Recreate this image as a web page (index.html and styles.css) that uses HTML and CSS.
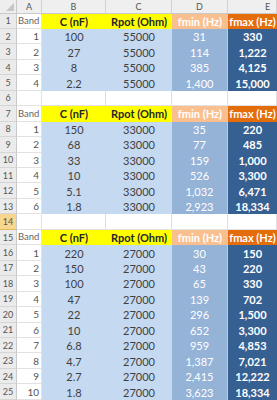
FILE: index.html
```html
<!DOCTYPE html>
<html>
<head>
<meta charset="utf-8">
<link rel="stylesheet" href="styles.css">
</head>
<body>
<div class="sheet">
  <div class="corner"><span class="tri"></span></div>
  <div class="ch">A</div><div class="ch">B</div><div class="ch">C</div><div class="ch">D</div><div class="ch ch-e">E</div>

  <div class="rh">1</div><div class="a band">Band</div><div class="y">C (nF)</div><div class="y">Rpot (Ohm)</div><div class="dh">fmin (Hz)</div><div class="eh">fmax (Hz)</div>
  <div class="rh">2</div><div class="a">1</div><div class="bc">100</div><div class="bc">55000</div><div class="d">31</div><div class="e">330</div>
  <div class="rh">3</div><div class="a">2</div><div class="bc">27</div><div class="bc">55000</div><div class="d">114</div><div class="e">1,222</div>
  <div class="rh">4</div><div class="a">3</div><div class="bc">8</div><div class="bc">55000</div><div class="d">385</div><div class="e">4,125</div>
  <div class="rh">5</div><div class="a">4</div><div class="bc">2.2</div><div class="bc">55000</div><div class="d">1,400</div><div class="e">15,000</div>
  <div class="rh">6</div><div class="a"></div><div class="w"></div><div class="w"></div><div class="w"></div><div class="w"></div>

  <div class="rh">7</div><div class="a band">Band</div><div class="y">C (nF)</div><div class="y">Rpot (Ohm)</div><div class="dh">fmin (Hz)</div><div class="eh">fmax (Hz)</div>
  <div class="rh">8</div><div class="a">1</div><div class="bc">150</div><div class="bc">33000</div><div class="d">35</div><div class="e">220</div>
  <div class="rh">9</div><div class="a">2</div><div class="bc">68</div><div class="bc">33000</div><div class="d">77</div><div class="e">485</div>
  <div class="rh">10</div><div class="a">3</div><div class="bc">33</div><div class="bc">33000</div><div class="d">159</div><div class="e">1,000</div>
  <div class="rh">11</div><div class="a">4</div><div class="bc">10</div><div class="bc">33000</div><div class="d">526</div><div class="e">3,300</div>
  <div class="rh">12</div><div class="a">5</div><div class="bc">5.1</div><div class="bc">33000</div><div class="d">1,032</div><div class="e">6,471</div>
  <div class="rh">13</div><div class="a">6</div><div class="bc">1.8</div><div class="bc">33000</div><div class="d">2,923</div><div class="e">18,334</div>
  <div class="rh sel">14</div><div class="a"></div><div class="w"></div><div class="w"></div><div class="w"></div><div class="w"></div>

  <div class="rh">15</div><div class="a band">Band</div><div class="y">C (nF)</div><div class="y">Rpot (Ohm)</div><div class="dh">fmin (Hz)</div><div class="eh">fmax (Hz)</div>
  <div class="rh">16</div><div class="a">1</div><div class="bc">220</div><div class="bc">27000</div><div class="d">30</div><div class="e">150</div>
  <div class="rh">17</div><div class="a">2</div><div class="bc">150</div><div class="bc">27000</div><div class="d">43</div><div class="e">220</div>
  <div class="rh">18</div><div class="a">3</div><div class="bc">100</div><div class="bc">27000</div><div class="d">65</div><div class="e">330</div>
  <div class="rh">19</div><div class="a">4</div><div class="bc">47</div><div class="bc">27000</div><div class="d">139</div><div class="e">702</div>
  <div class="rh">20</div><div class="a">5</div><div class="bc">22</div><div class="bc">27000</div><div class="d">296</div><div class="e">1,500</div>
  <div class="rh">21</div><div class="a">6</div><div class="bc">10</div><div class="bc">27000</div><div class="d">652</div><div class="e">3,300</div>
  <div class="rh">22</div><div class="a">7</div><div class="bc">6.8</div><div class="bc">27000</div><div class="d">959</div><div class="e">4,853</div>
  <div class="rh">23</div><div class="a">8</div><div class="bc">4.7</div><div class="bc">27000</div><div class="d">1,387</div><div class="e">7,021</div>
  <div class="rh">24</div><div class="a">9</div><div class="bc">2.7</div><div class="bc">27000</div><div class="d">2,415</div><div class="e">12,222</div>
  <div class="rh">25</div><div class="a">10</div><div class="bc">1.8</div><div class="bc">27000</div><div class="d">3,623</div><div class="e">18,334</div>
</div>
</body>
</html>
```

FILE: styles.css
```css
html, body {
  margin: 0;
  padding: 0;
  background: #ffffff;
  overflow: hidden;
}

.sheet {
  display: grid;
  grid-template-columns: 17px 25px 64px 66px 56px 49px;
  grid-template-rows: 13.5px repeat(25, 15.46px);
  width: 277px;
  height: 400px;
  font-family: Lato, "Open Sans", sans-serif;
  font-size: 11px;
  color: #404040;
}

.sheet > div {
  box-sizing: border-box;
  display: flex;
  align-items: center;
  justify-content: center;
  white-space: nowrap;
  overflow: hidden;
  line-height: 1;
}

.corner {
  background: #eeeeee;
  border-right: 1px solid #c9c9c9;
  border-bottom: 1px solid #c9c9c9;
  position: relative;
}

.tri {
  position: absolute;
  right: 2px;
  bottom: 2px;
  width: 0;
  height: 0;
  border-left: 8px solid transparent;
  border-bottom: 8px solid #c6c6c6;
}

.ch {
  background: #efefef;
  border-right: 1px solid #d2d2d2;
  border-bottom: 1px solid #c9c9c9;
  font-size: 9px;
  color: #555555;
}

.ch-e {
  justify-content: flex-start !important;
  padding-left: 37px;
}

.rh {
  background: #ebebeb;
  border-right: 1px solid #c9c9c9;
  border-bottom: 1px solid #d6d6d6;
  font-size: 9px;
  color: #555555;
}

.rh.sel {
  background: #f9d68e;
  border-bottom-color: #e3b865;
}

.a {
  background: #ffffff;
  border-right: 1px solid #e2e2e2;
  border-bottom: 1px solid #e2e2e2;
  justify-content: flex-end !important;
  padding-right: 2px;
  font-size: 10px;
  color: #555555;
}

.a.band {
  justify-content: flex-start !important;
  padding-left: 1px;
  font-size: 9.5px;
  color: #666666;
}

.w {
  background: #ffffff;
  border-right: 1px solid #dedede;
  border-bottom: 1px solid #e2e2e2;
}

.y {
  background: #ffff00;
  font-weight: bold;
  color: #262626;
}

.dh {
  background: #fabf8f;
  color: #ffffff;
  font-weight: bold;
}

.eh {
  background: #e46c0a;
  color: #ffffff;
  font-weight: bold;
}

.bc {
  background: #c5d9f1;
  color: #3f3f3f;
}

.d {
  background: #95b3d7;
  color: #ffffff;
  border-right: 1px solid #b7cbe4;
}

.e {
  background: #366092;
  color: #ffffff;
  font-weight: bold;
}
```
